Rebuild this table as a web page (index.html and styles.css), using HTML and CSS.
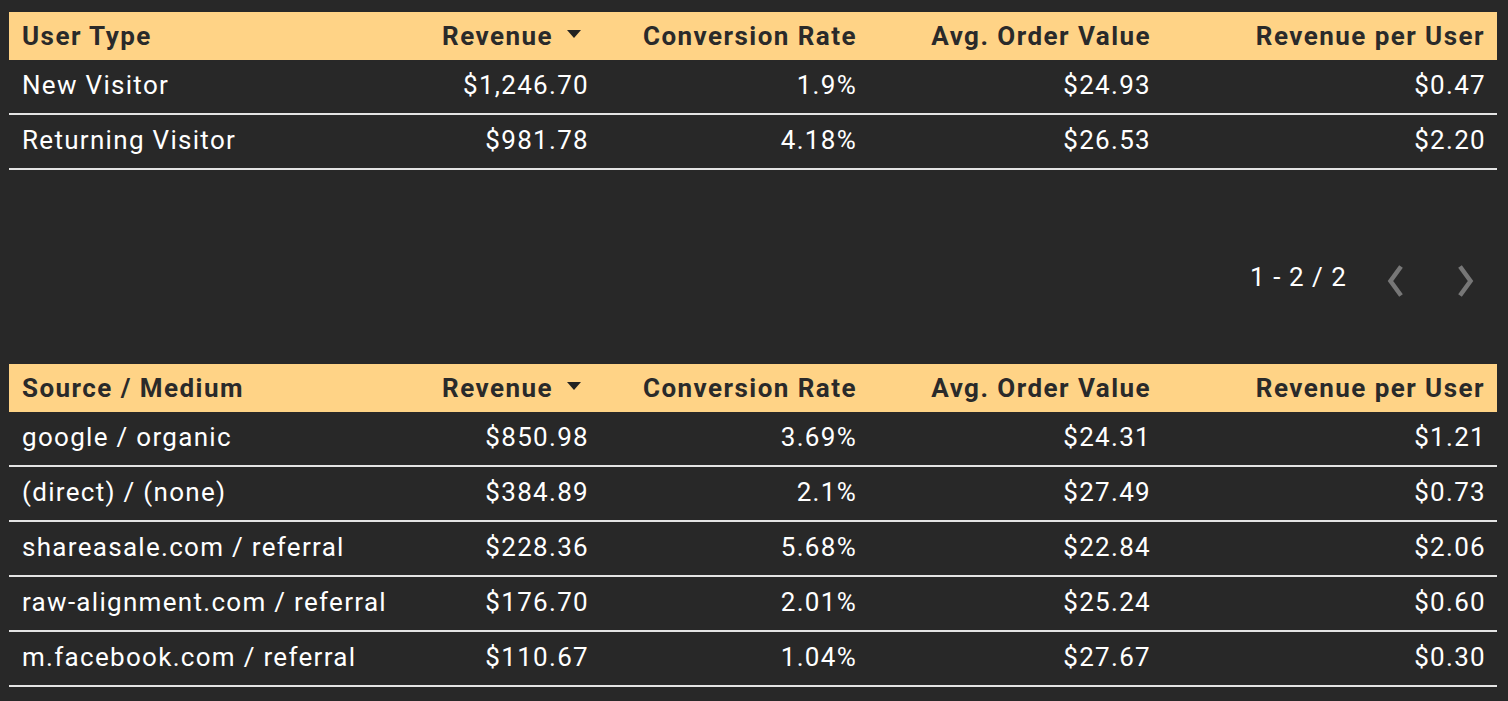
FILE: index.html
```html
<!DOCTYPE html>
<html>
<head>
<meta charset="utf-8">
<link rel="stylesheet" href="styles.css">
</head>
<body>
<div class="page">
  <div class="table t1">
    <div class="row head">
      <div class="cell left">User Type</div>
      <div class="cell sort">Revenue <svg class="arrow" viewBox="0 0 14 8" width="14" height="8"><path d="M0 0H14L7 8Z" fill="#222"/></svg></div>
      <div class="cell">Conversion Rate</div>
      <div class="cell">Avg. Order Value</div>
      <div class="cell">Revenue per User</div>
    </div>
    <div class="row">
      <div class="cell left">New Visitor</div>
      <div class="cell">$1,246.70</div>
      <div class="cell">1.9%</div>
      <div class="cell">$24.93</div>
      <div class="cell">$0.47</div>
    </div>
    <div class="row">
      <div class="cell left">Returning Visitor</div>
      <div class="cell">$981.78</div>
      <div class="cell">4.18%</div>
      <div class="cell">$26.53</div>
      <div class="cell">$2.20</div>
    </div>
  </div>

  <div class="pager">
    <span class="count">1 - 2 / 2</span>
    <svg class="chev" viewBox="0 0 16 32" width="16" height="32"><path d="M14 1.5L3.5 16L14 30.5" fill="none" stroke="#777777" stroke-width="4.5"/></svg>
    <svg class="chev" viewBox="0 0 16 32" width="16" height="32"><path d="M2 1.5L12.5 16L2 30.5" fill="none" stroke="#777777" stroke-width="4.5"/></svg>
  </div>

  <div class="table t2">
    <div class="row head">
      <div class="cell left">Source / Medium</div>
      <div class="cell sort">Revenue <svg class="arrow" viewBox="0 0 14 8" width="14" height="8"><path d="M0 0H14L7 8Z" fill="#222"/></svg></div>
      <div class="cell">Conversion Rate</div>
      <div class="cell">Avg. Order Value</div>
      <div class="cell">Revenue per User</div>
    </div>
    <div class="row">
      <div class="cell left">google / organic</div>
      <div class="cell">$850.98</div>
      <div class="cell">3.69%</div>
      <div class="cell">$24.31</div>
      <div class="cell">$1.21</div>
    </div>
    <div class="row">
      <div class="cell left">(direct) / (none)</div>
      <div class="cell">$384.89</div>
      <div class="cell">2.1%</div>
      <div class="cell">$27.49</div>
      <div class="cell">$0.73</div>
    </div>
    <div class="row">
      <div class="cell left">shareasale.com / referral</div>
      <div class="cell">$228.36</div>
      <div class="cell">5.68%</div>
      <div class="cell">$22.84</div>
      <div class="cell">$2.06</div>
    </div>
    <div class="row">
      <div class="cell left">raw-alignment.com / referral</div>
      <div class="cell">$176.70</div>
      <div class="cell">2.01%</div>
      <div class="cell">$25.24</div>
      <div class="cell">$0.60</div>
    </div>
    <div class="row">
      <div class="cell left">m.facebook.com / referral</div>
      <div class="cell">$110.67</div>
      <div class="cell">1.04%</div>
      <div class="cell">$27.67</div>
      <div class="cell">$0.30</div>
    </div>
  </div>
</div>
</body>
</html>
```

FILE: styles.css
```css
html, body {
  margin: 0;
  padding: 0;
  background: #282828;
}
body {
  font-family: Roboto, "Liberation Sans", sans-serif;
  font-size: 26px;
  letter-spacing: 0.05em;
  color: #ffffff;
}
.page {
  padding: 12px 11px 0 9px;
  display: flex;
  flex-direction: column;
}
.table {
  display: flex;
  flex-direction: column;
}
.row {
  display: grid;
  grid-template-columns: 1fr 200px 268px 294px 334px;
  height: 50px;
  padding-bottom: 3px;
  border-bottom: 2px solid #e4e4e4;
  align-items: center;
}
.row.head {
  height: 48px;
  padding-bottom: 0;
  border-bottom: none;
  background: #ffd386;
  color: #2a2a2a;
  font-weight: 700;
  letter-spacing: 0.056em;
}
.cell {
  padding: 0 12px 0 13px;
  text-align: right;
  white-space: nowrap;
}
.row .cell:last-child {
  padding-right: 11px;
}
.row.head .cell:last-child {
  padding-right: 12px;
}
.cell.left {
  text-align: left;
}
.cell.sort {
  display: flex;
  justify-content: flex-end;
  align-items: center;
}
.arrow {
  margin-left: 14px;
  margin-right: 8px;
  margin-top: -4px;
}
.pager {
  display: flex;
  justify-content: flex-end;
  align-items: center;
  height: 48px;
  margin-top: 83px;
  margin-bottom: 63px;
  padding-right: 23px;
}
.count {
  font-size: 26px;
  letter-spacing: 0.04em;
  margin-right: 40px;
}
.chev {
  margin-top: 8px;
}
.chev + .chev {
  margin-left: 55px;
}
```
